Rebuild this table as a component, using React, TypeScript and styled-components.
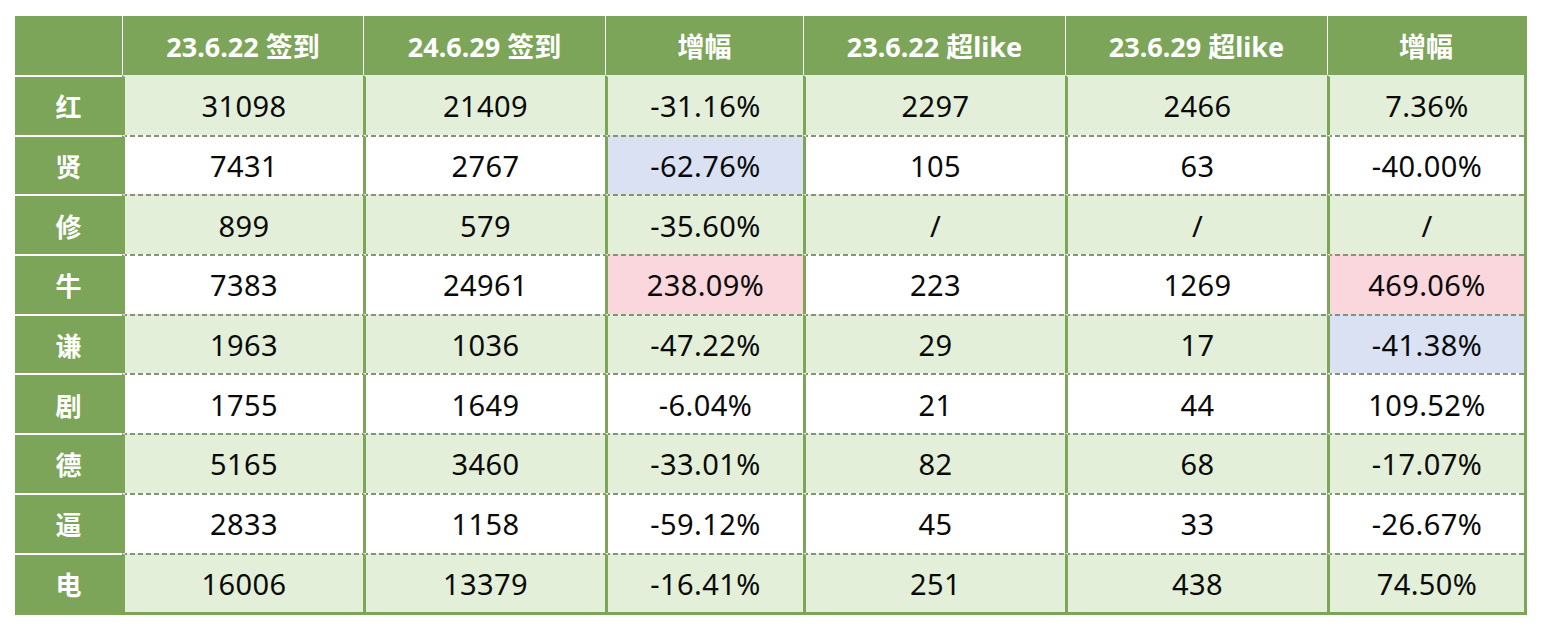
import React, { FC } from 'react';
import styled, { createGlobalStyle } from 'styled-components';

const GlobalStyle = createGlobalStyle`
  html, body {
    margin: 0;
    padding: 0;
    background: #ffffff;
  }
  body {
    font-family: "Noto Sans", "Noto Sans CJK SC", sans-serif;
  }
`;

const GREEN = '#7da55a';
const LIGHT = '#e3efd9';
const DASH = '#849476';

const Page = styled.div`
  padding: 16px 0 0 15px;
`;

const Sheet = styled.table`
  border-collapse: separate;
  border-spacing: 0;
  width: 1509px;
  table-layout: fixed;
  border-right: 3px solid ${GREEN};
  border-bottom: 3px solid ${GREEN};
  background: ${GREEN};
`;

const HeadCell = styled.th<{ first?: boolean }>`
  height: 59px;
  padding: 0;
  background: ${GREEN};
  color: #ffffff;
  font-family: "Noto Sans", "Noto Sans CJK SC", sans-serif;
  font-weight: 700;
  font-size: 27px;
  text-align: center;
  vertical-align: middle;
  border-left: ${({ first }) => (first ? 'none' : '1px solid #ffffff')};
`;

const RowLabel = styled.th`
  height: 57.7px;
  padding: 0;
  background: ${GREEN};
  color: #ffffff;
  font-family: "Noto Sans CJK SC", sans-serif;
  font-weight: 700;
  font-size: 26px;
  text-align: center;
  vertical-align: middle;
  border-top: 2px solid #ffffff;
`;

const Cell = styled.td<{ fill: string; top?: boolean }>`
  height: 57.7px;
  padding: 0;
  border-top: 2px solid transparent;
  border-left: 3px solid ${GREEN};
  background: ${({ fill, top }) =>
    top
      ? fill
      : `repeating-linear-gradient(90deg, ${DASH} 0 5px, transparent 5px 8px) top left / 100% 2px no-repeat border-box, ${fill}`};
  color: #0a0a0a;
  font-family: "Noto Sans", sans-serif;
  font-size: 29px;
  letter-spacing: 0.4px;
  text-align: center;
  vertical-align: middle;
`;

const headers = ['23.6.22 签到', '24.6.29 签到', '增幅', '23.6.22 超like', '23.6.29 超like', '增幅'];
const widths = [107, 241, 242, 198, 262, 262, 197];

type Mark = 'blue' | 'pink' | undefined;

interface IRow {
  name: string;
  values: string[];
  marks?: Record<number, Mark>;
}

const rows: IRow[] = [
  { name: '红', values: ['31098', '21409', '-31.16%', '2297', '2466', '7.36%'] },
  { name: '贤', values: ['7431', '2767', '-62.76%', '105', '63', '-40.00%'], marks: { 2: 'blue' } },
  { name: '修', values: ['899', '579', '-35.60%', '/', '/', '/'] },
  { name: '牛', values: ['7383', '24961', '238.09%', '223', '1269', '469.06%'], marks: { 2: 'pink', 5: 'pink' } },
  { name: '谦', values: ['1963', '1036', '-47.22%', '29', '17', '-41.38%'], marks: { 5: 'blue' } },
  { name: '剧', values: ['1755', '1649', '-6.04%', '21', '44', '109.52%'] },
  { name: '德', values: ['5165', '3460', '-33.01%', '82', '68', '-17.07%'] },
  { name: '逼', values: ['2833', '1158', '-59.12%', '45', '33', '-26.67%'] },
  { name: '电', values: ['16006', '13379', '-16.41%', '251', '438', '74.50%'] },
];

const fillFor = (rowIndex: number, mark: Mark) => {
  if (mark === 'blue') return '#d9e1f2';
  if (mark === 'pink') return '#f9d7dc';
  return rowIndex % 2 === 0 ? LIGHT : '#ffffff';
};

const App: FC = () => (
  <Page>
    <GlobalStyle />
    <Sheet>
      <colgroup>
        {widths.map((w, i) => (
          <col key={i} style={{ width: w }} />
        ))}
      </colgroup>
      <thead>
        <tr>
          <HeadCell first />
          {headers.map((h, i) => (
            <HeadCell key={i}>{h}</HeadCell>
          ))}
        </tr>
      </thead>
      <tbody>
        {rows.map((row, r) => (
          <tr key={row.name}>
            <RowLabel>{row.name}</RowLabel>
            {row.values.map((v, c) => (
              <Cell key={c} top={r === 0} fill={fillFor(r, row.marks?.[c])}>
                {v}
              </Cell>
            ))}
          </tr>
        ))}
      </tbody>
    </Sheet>
  </Page>
);

export default App;
